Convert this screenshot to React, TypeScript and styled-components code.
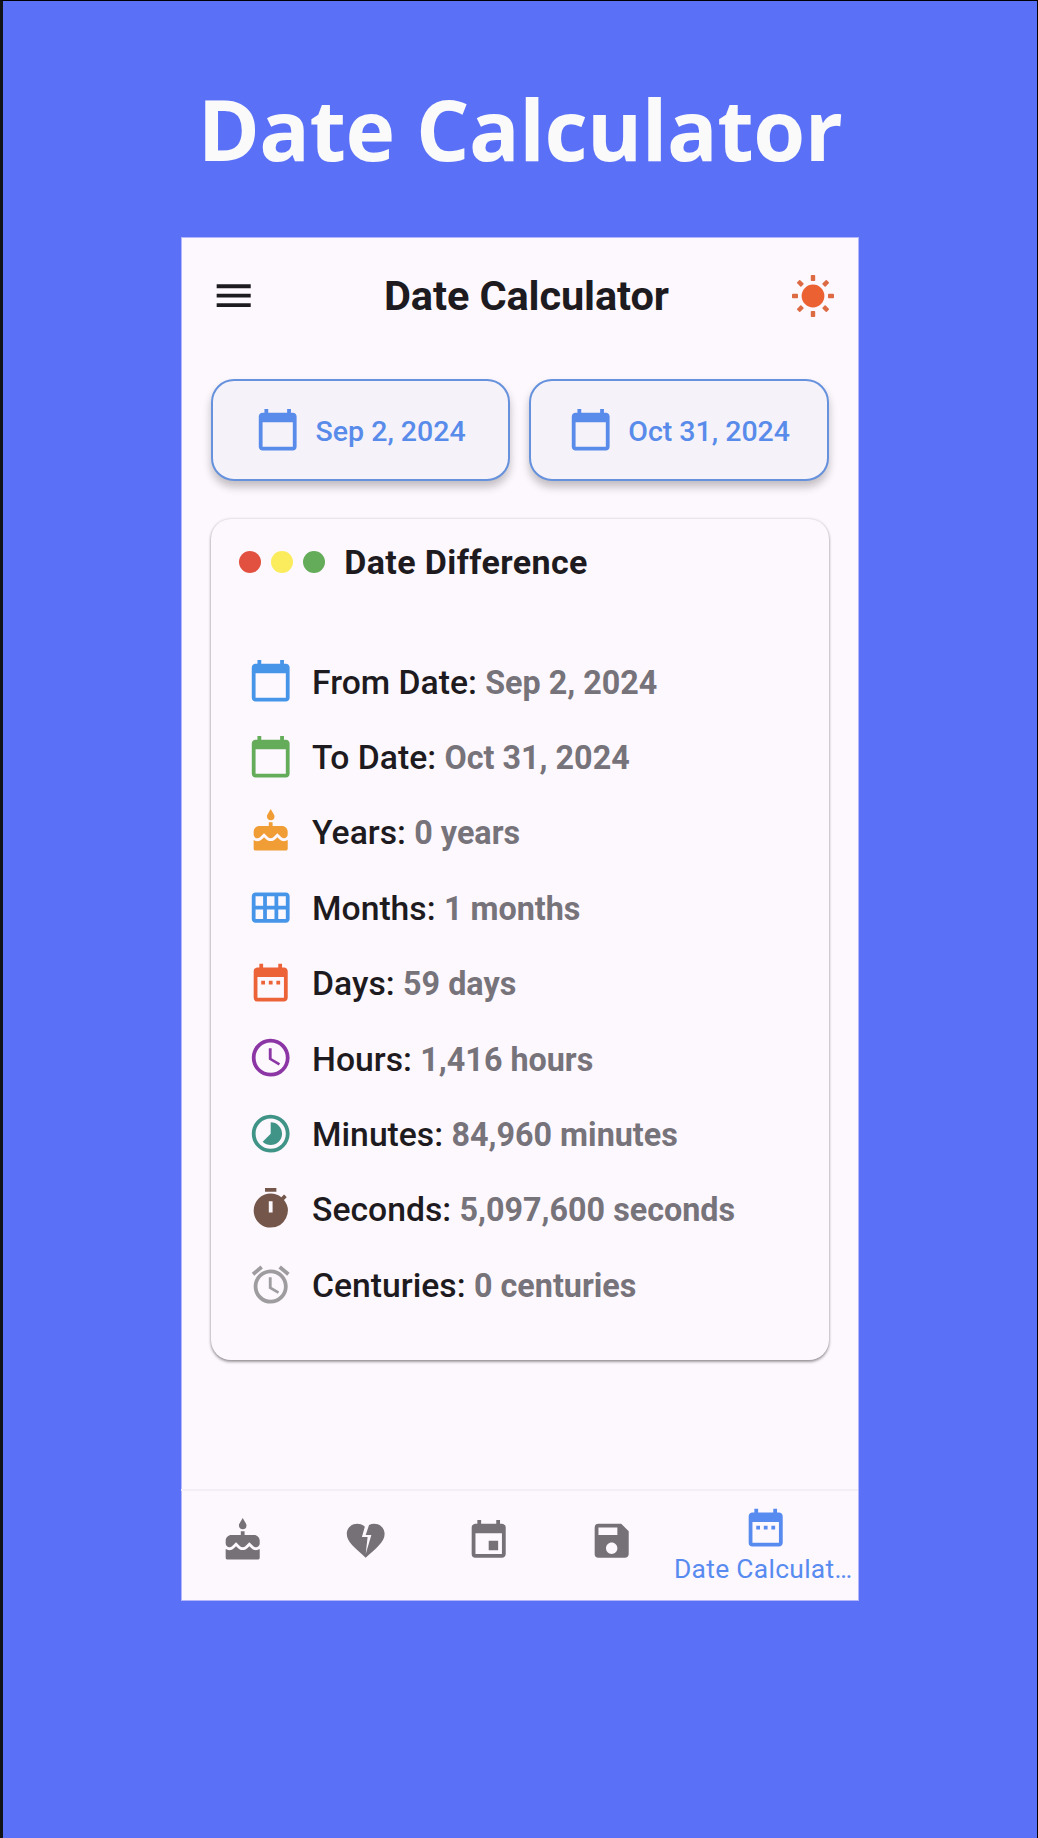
import React from "react";
import styled, { createGlobalStyle } from "styled-components";
import type { IconType } from "react-icons";
import {
  MdAccessTime,
  MdAlarm,
  MdCake,
  MdCalendarToday,
  MdCalendarViewMonth,
  MdDateRange,
  MdEvent,
  MdHeartBroken,
  MdMenu,
  MdSave,
  MdTimelapse,
  MdTimer,
} from "react-icons/md";

const GlobalStyle = createGlobalStyle`
  *, *::before, *::after { box-sizing: border-box; }
  body { margin: 0; background: #5a70f6; }
  button { font: inherit; }
`;

const Page = styled.main`
  display: flex;
  flex-direction: column;
  align-items: center;
  height: 1838px;
  background: #5a70f6;
  border: solid #000;
  border-width: 1px 1px 0 3px;
  border-left-color: #111317;
  font-family: Roboto, "Liberation Sans", sans-serif;
`;

const Headline = styled.h1`
  margin: 0;
  padding: 70px 0 0;
  height: 236px;
  font: 700 84px/115px "Open Sans", "Noto Sans", sans-serif;
  letter-spacing: -0.5px;
  color: #fafafa;
  white-space: nowrap;
`;

const Screen = styled.section`
  display: flex;
  flex-direction: column;
  width: 678px;
  height: 1364px;
  border: 1px solid #b3b6fa;
  background: #fdf8fe;
`;

const AppBar = styled.header`
  display: flex;
  align-items: center;
  justify-content: space-between;
  height: 115px;
  padding: 1px 22px 0 28.5px;
  color: #1d1b20;
`;

const AppTitle = styled.h2`
  margin: 0;
  padding-left: 7px;
  font-size: 41.5px;
  font-weight: 700;
  line-height: 50px;
  letter-spacing: -0.1px;
  white-space: nowrap;
`;

const IconButton = styled.button`
  display: flex;
  padding: 0;
  border: 0;
  background: none;
  color: inherit;
`;

const Content = styled.div`
  display: flex;
  flex-direction: column;
  flex: 1;
  gap: 38px;
  padding: 26px 29.3px 0 28.7px;
`;

const DateButtons = styled.div`
  display: grid;
  grid-template-columns: 1fr 1fr;
  gap: 19px;
`;

const DateButton = styled.button`
  display: flex;
  align-items: center;
  justify-content: center;
  gap: 15px;
  height: 102px;
  padding: 0;
  border: 2px solid #6591dd;
  border-radius: 23px;
  background: #f5f2f9;
  box-shadow: 0 6px 9px rgba(0, 0, 0, 0.24);
  color: #588bea;
  font-size: 28.5px;
  font-weight: 500;
  white-space: nowrap;

  span {
    padding-top: 2px;
  }
`;

const Card = styled.article`
  height: 841px;
  padding: 20px 28px;
  border-radius: 20px;
  background: #fdf8fe;
  box-shadow: 0 2px 3px rgba(0, 0, 0, 0.36), 0 0 3px rgba(0, 0, 0, 0.18);
`;

const CardHeader = styled.div`
  display: flex;
  align-items: center;
  gap: 9.2px;
  height: 46px;
`;

const Dot = styled.i<{ $color: string }>`
  width: 22.8px;
  height: 22.8px;
  border-radius: 50%;
  background: ${(p) => p.$color};
`;

const CardTitle = styled.h3`
  margin: 0 0 0 9.6px;
  font-size: 34px;
  font-weight: 700;
  line-height: 40px;
  letter-spacing: 0.4px;
  color: #1d1b20;
  white-space: nowrap;
`;

const Facts = styled.ul`
  margin: 0;
  padding: 58.4px 0 0 9px;
  list-style: none;
`;

const Fact = styled.li`
  display: flex;
  align-items: center;
  gap: 19px;
  height: 75.4px;
  color: #1d1b20;
  font-size: 33.7px;
  font-weight: 500;
  white-space: nowrap;
`;

const FactText = styled.span`
  padding-top: 2px;
`;

const FactIcon = styled.span<{ $color: string }>`
  display: flex;
  color: ${(p) => p.$color};
`;

const FactValue = styled.b`
  font-size: 32.3px;
  font-weight: 700;
  color: #77737a;
`;

const NavBar = styled.nav`
  display: flex;
  height: 111px;
  margin-left: -1px;
  border-top: 2px solid #f4eff6;
`;

const NavItem = styled.a<{ $active?: boolean }>`
  display: flex;
  flex-direction: column;
  align-items: center;
  justify-content: ${(p) => (p.$active ? "flex-start" : "center")};
  flex: ${(p) => (p.$active ? 1.5 : 1)} 1 0;
  min-width: 0;
  padding: ${(p) => (p.$active ? "14px 0 0" : "0 0 10px")};
  color: ${(p) => (p.$active ? "#588bf0" : "#757177")};
`;

const NavLabel = styled.span`
  margin: 2px 5px 0 0;
  font-size: 26.4px;
  line-height: 34px;
  letter-spacing: 0.3px;
  white-space: nowrap;
`;

const ICON = 45.4;

function SunIcon() {
  const rays = [0, 45, 90, 135, 180, 225, 270, 315];
  return (
    <svg width="46" height="46" viewBox="-23 -23 46 46" aria-hidden="true">
      <circle r="11.4" fill="#ec6131" />
      {rays.map((angle) => (
        <rect key={angle} x="-2.2" y="-21" width="4.4" height="6" rx="0.8" fill="#dc6a43" transform={`rotate(${angle})`} />
      ))}
    </svg>
  );
}

const facts: { icon: IconType; color: string; label: string; value: string }[] = [
  { icon: MdCalendarToday, color: "#4795e9", label: "From Date:", value: "Sep 2, 2024" },
  { icon: MdCalendarToday, color: "#64ac5a", label: "To Date:", value: "Oct 31, 2024" },
  { icon: MdCake, color: "#f09d36", label: "Years:", value: "0 years" },
  { icon: MdCalendarViewMonth, color: "#4795e9", label: "Months:", value: "1 months" },
  { icon: MdDateRange, color: "#ec6337", label: "Days:", value: "59 days" },
  { icon: MdAccessTime, color: "#8c36a5", label: "Hours:", value: "1,416 hours" },
  { icon: MdTimelapse, color: "#409487", label: "Minutes:", value: "84,960 minutes" },
  { icon: MdTimer, color: "#74574a", label: "Seconds:", value: "5,097,600 seconds" },
  { icon: MdAlarm, color: "#9e9c9f", label: "Centuries:", value: "0 centuries" },
];

const tabs: IconType[] = [MdCake, MdHeartBroken, MdEvent, MdSave];

export default function App() {
  return (
    <>
      <GlobalStyle />
      <Page>
        <Headline>Date Calculator</Headline>
        <Screen>
          <AppBar>
            <IconButton aria-label="Menu">
              <MdMenu size={ICON} />
            </IconButton>
            <AppTitle>Date Calculator</AppTitle>
            <IconButton aria-label="Theme">
              <SunIcon />
            </IconButton>
          </AppBar>
          <Content>
            <DateButtons>
              {["Sep 2, 2024", "Oct 31, 2024"].map((date) => (
                <DateButton key={date}>
                  <MdCalendarToday size={ICON} />
                  <span>{date}</span>
                </DateButton>
              ))}
            </DateButtons>
            <Card>
              <CardHeader>
                <Dot $color="#e2503f" />
                <Dot $color="#fbec5d" />
                <Dot $color="#64ac5a" />
                <CardTitle>Date Difference</CardTitle>
              </CardHeader>
              <Facts>
                {facts.map(({ icon: Icon, color, label, value }) => (
                  <Fact key={label}>
                    <FactIcon $color={color}>
                      <Icon size={ICON} />
                    </FactIcon>
                    <FactText>
                      {label} <FactValue>{value}</FactValue>
                    </FactText>
                  </Fact>
                ))}
              </Facts>
            </Card>
          </Content>
          <NavBar>
            {tabs.map((Icon, i) => (
              <NavItem key={i}>
                <Icon size={ICON} />
              </NavItem>
            ))}
            <NavItem $active>
              <MdDateRange size={ICON} />
              <NavLabel>Date Calculat…</NavLabel>
            </NavItem>
          </NavBar>
        </Screen>
      </Page>
    </>
  );
}
